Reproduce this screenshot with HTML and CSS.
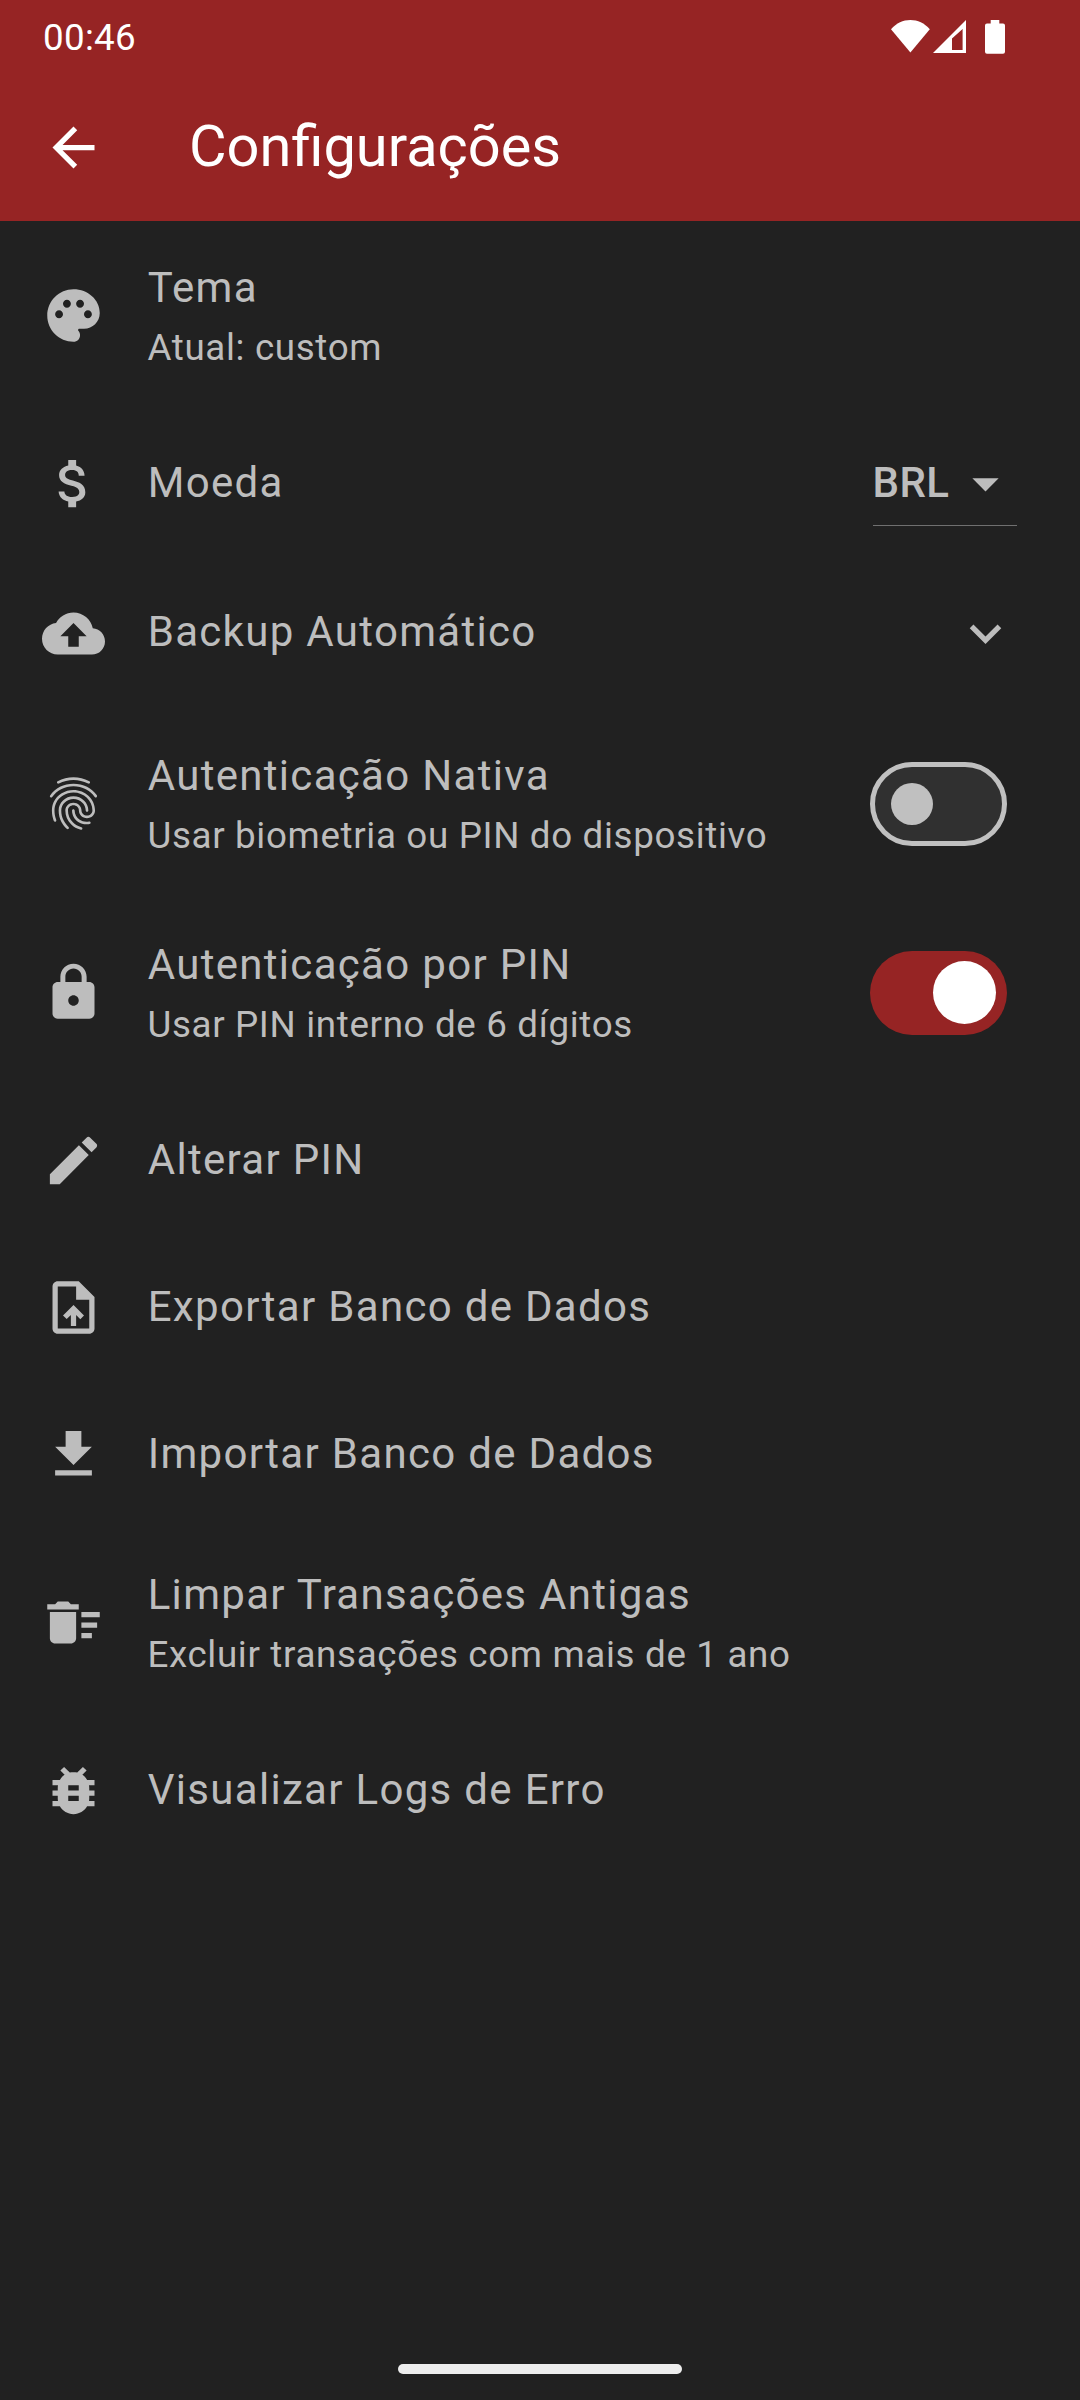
FILE: index.html
```html
<!DOCTYPE html>
<html lang="pt-BR">
<head>
  <meta charset="utf-8">
  <title>Configurações</title>
  <link rel="stylesheet" href="styles.css">
</head>
<body>
  <div class="screen">
    <header class="header">
      <div class="status-bar">
        <span class="clock">00:46</span>
        <div class="status-icons">
          <svg class="wifi" width="39" height="34" viewBox="0 0 39 34"><path d="M19.4 32.5L0 9.2C5.5 3 12 0 19.4 0s13.900 3 19.400 9.200z"/></svg>
          <svg class="signal" width="33" height="34" viewBox="0 0 33 34"><path fill-rule="evenodd" d="M33 0v33H0zM29.600 9L19 18.500V30h10.600z"/></svg>
          <svg class="battery" width="20" height="34" viewBox="0 0 20 34"><path d="M5.700 0h8.600v3.500H18a2 2 0 0 1 2 2v26.300a2 2 0 0 1-2 2H2a2 2 0 0 1-2-2V5.500a2 2 0 0 1 2-2h3.700z"/></svg>
        </div>
      </div>
      <div class="app-bar">
        <svg class="icon" viewBox="0 0 24 24"><path d="M20 11H7.830l5.590-5.590L12 4l-8 8 8 8 1.410-1.410L7.830 13H20v-2z"/></svg>
        <h1 class="app-title">Configurações</h1>
      </div>
    </header>

    <main class="list">
      <div class="row row-tall">
        <svg class="icon" viewBox="0 0 24 24"><path d="M12 2C6.490 2 2 6.490 2 12s4.490 10 10 10c1.380 0 2.500-1.120 2.500-2.500 0-.610-.230-1.200-.640-1.670-.080-.100-.130-.210-.130-.330 0-.280.220-.500.500-.500H16c3.310 0 6-2.690 6-6 0-4.960-4.490-9-10-9zm5.500 11c-.830 0-1.500-.670-1.500-1.500s.670-1.500 1.500-1.500 1.500.670 1.500 1.500-.670 1.500-1.500 1.500zm-3-4c-.830 0-1.500-.670-1.500-1.500S13.670 6 14.500 6s1.500.670 1.500 1.500S15.330 9 14.500 9zM5 11.500c0-.830.670-1.500 1.500-1.500s1.500.670 1.500 1.500S7.330 13 6.500 13 5 12.330 5 11.500zm6-4c0 .830-.670 1.500-1.500 1.500S8 8.330 8 7.500 8.670 6 9.500 6s1.500.670 1.500 1.500z"/></svg>
        <div class="text"><div class="title">Tema</div><div class="subtitle">Atual: custom</div></div>
      </div>

      <div class="row">
        <svg class="icon" viewBox="0 0 24 24"><path d="M11.8 10.9c-2.27-.59-3-1.2-3-2.15 0-1.09 1.01-1.85 2.7-1.85 1.78 0 2.44.85 2.5 2.1h2.21c-.07-1.72-1.12-3.3-3.21-3.81V3h-3v2.16c-1.94.42-3.5 1.68-3.5 3.61 0 2.31 1.91 3.46 4.7 4.13 2.5.6 3 1.48 3 2.41 0 .69-.49 1.79-2.7 1.79-2.06 0-2.87-.92-2.98-2.1h-2.2c.12 2.19 1.76 3.42 3.68 3.83V21h3v-2.15c1.95-.37 3.5-1.5 3.5-3.55 0-2.84-2.43-3.81-4.7-4.4z"/></svg>
        <div class="text"><div class="title">Moeda</div></div>
        <div class="dropdown">
          <span class="dropdown-value">BRL</span>
          <svg class="icon" viewBox="0 0 24 24"><path d="M7 10l5 5 5-5z"/></svg>
        </div>
      </div>

      <div class="row row-expandable">
        <svg class="icon" viewBox="0 0 24 24"><path d="M19.35 10.04C18.67 6.59 15.64 4 12 4 9.11 4 6.6 5.64 5.35 8.04 2.34 8.36 0 10.91 0 14c0 3.31 2.69 6 6 6h13c2.76 0 5-2.24 5-5 0-2.64-2.05-4.78-4.65-4.96zM14 13v4h-4v-4H7l5-5 5 5h-3z"/></svg>
        <div class="text"><div class="title">Backup Automático</div></div>
        <svg class="icon" viewBox="0 0 24 24"><path d="M16.59 8.59L12 13.17 7.41 8.59 6 10l6 6 6-6z"/></svg>
      </div>

      <div class="row row-tall">
        <svg class="icon" viewBox="0 0 24 24"><path d="M17.81 4.47c-.08 0-.16-.02-.23-.06C15.66 3.42 14 3 12.01 3c-1.98 0-3.86.47-5.57 1.41-.24.13-.54.04-.68-.2-.13-.24-.04-.55.2-.68C7.82 2.52 9.86 2 12.01 2c2.13 0 3.99.47 6.03 1.52.25.13.34.43.21.67-.09.18-.26.28-.44.28zM3.5 9.72c-.1 0-.2-.03-.29-.09-.23-.16-.28-.47-.12-.7.99-1.4 2.25-2.5 3.75-3.27C9.98 4.04 14 4.03 17.15 5.65c1.5.77 2.76 1.86 3.75 3.25.16.22.11.54-.12.7-.23.16-.54.11-.7-.12-.9-1.26-2.04-2.25-3.39-2.94-2.87-1.47-6.54-1.47-9.4.01-1.36.7-2.5 1.7-3.4 2.96-.08.14-.23.21-.39.21zm6.25 12.07c-.13 0-.26-.05-.35-.15-.87-.87-1.34-1.43-2.01-2.64-.69-1.23-1.05-2.73-1.05-4.34 0-2.97 2.54-5.39 5.66-5.39s5.66 2.42 5.66 5.39c0 .28-.22.5-.5.5s-.5-.22-.5-.5c0-2.42-2.09-4.39-4.66-4.39-2.57 0-4.66 1.97-4.66 4.39 0 1.44.32 2.77.93 3.85.64 1.15 1.08 1.64 1.85 2.42.19.2.19.51 0 .71-.11.1-.24.15-.37.15zm7.17-1.85c-1.19 0-2.24-.3-3.1-.89-1.49-1.01-2.38-2.65-2.38-4.39 0-.28.22-.5.5-.5s.5.22.5.5c0 1.41.72 2.74 1.94 3.56.71.48 1.54.71 2.54.71.24 0 .64-.03 1.04-.1.27-.05.53.13.58.41.05.27-.13.53-.41.58-.57.11-1.07.12-1.21.12zM14.91 22c-.04 0-.09-.01-.13-.02-1.59-.44-2.63-1.03-3.72-2.1-1.4-1.39-2.17-3.24-2.17-5.22 0-1.62 1.38-2.94 3.08-2.94 1.7 0 3.08 1.32 3.08 2.94 0 1.07.93 1.94 2.08 1.94s2.08-.87 2.08-1.94c0-3.77-3.25-6.83-7.25-6.83-2.84 0-5.44 1.58-6.61 4.03-.39.81-.59 1.76-.59 2.8 0 .78.07 2.01.67 3.61.1.26-.03.55-.29.64-.26.1-.55-.04-.64-.29-.49-1.31-.73-2.61-.73-3.96 0-1.2.23-2.29.68-3.24 1.33-2.79 4.28-4.6 7.51-4.6 4.55 0 8.25 3.51 8.25 7.83 0 1.62-1.38 2.94-3.08 2.94s-3.08-1.32-3.08-2.94c0-1.07-.93-1.94-2.08-1.94s-2.08.87-2.08 1.94c0 1.71.66 3.31 1.87 4.51.95.94 1.86 1.46 3.27 1.85.27.07.42.35.35.61-.05.23-.26.38-.47.38z"/></svg>
        <div class="text"><div class="title">Autenticação Nativa</div><div class="subtitle">Usar biometria ou PIN do dispositivo</div></div>
        <div class="switch"><span class="thumb"></span></div>
      </div>

      <div class="row row-tall">
        <svg class="icon" viewBox="0 0 24 24"><path d="M18 8h-1V6c0-2.76-2.24-5-5-5S7 3.24 7 6v2H6c-1.1 0-2 .9-2 2v10c0 1.100.9 2 2 2h12c1.100 0 2-.9 2-2V10c0-1.100-.9-2-2-2zm-6 9c-1.100 0-2-.9-2-2s.9-2 2-2 2 .9 2 2-.9 2-2 2zm3.100-9H8.900V6c0-1.710 1.390-3.100 3.100-3.100 1.710 0 3.100 1.390 3.100 3.100v2z"/></svg>
        <div class="text"><div class="title">Autenticação por PIN</div><div class="subtitle">Usar PIN interno de 6 dígitos</div></div>
        <div class="switch switch-on"><span class="thumb"></span></div>
      </div>

      <div class="row">
        <svg class="icon" viewBox="0 0 24 24"><path d="M3 17.25V21h3.75L17.81 9.940l-3.750-3.750L3 17.250zM20.710 7.040c.390-.390.390-1.020 0-1.410l-2.340-2.340c-.390-.390-1.020-.390-1.410 0l-1.830 1.830 3.750 3.750 1.830-1.830z"/></svg>
        <div class="text"><div class="title">Alterar PIN</div></div>
      </div>

      <div class="row">
        <svg class="icon" viewBox="0 0 24 24"><path d="M14 2H6c-1.100 0-1.990.9-1.990 2L4 20c0 1.100.890 2 1.990 2H18c1.100 0 2-.9 2-2V8l-6-6zm4 18H6V4h7v5h5v11zM8 15.010l1.410 1.410L11 14.840V19h2v-4.160l1.590 1.590L16 15.010 12.010 11 8 15.010z"/></svg>
        <div class="text"><div class="title">Exportar Banco de Dados</div></div>
      </div>

      <div class="row">
        <svg class="icon" viewBox="0 0 24 24"><path d="M19 9h-4V3H9v6H5l7 7 7-7zM5 18v2h14v-2H5z"/></svg>
        <div class="text"><div class="title">Importar Banco de Dados</div></div>
      </div>

      <div class="row row-tall">
        <svg class="icon" viewBox="0 0 24 24"><path d="M15 16h4v2h-4zm0-8h7v2h-7zm0 4h6v2h-6zM3 18c0 1.100.9 2 2 2h6c1.100 0 2-.9 2-2V8H3v10zM14 5h-3l-1-1H6L5 5H2v2h12z"/></svg>
        <div class="text"><div class="title">Limpar Transações Antigas</div><div class="subtitle">Excluir transações com mais de 1 ano</div></div>
      </div>

      <div class="row">
        <svg class="icon" viewBox="0 0 24 24"><path d="M20 8h-2.810c-.450-.780-1.070-1.450-1.820-1.960L17 4.410 15.590 3l-2.170 2.170C12.960 5.060 12.490 5 12 5c-.490 0-.960.060-1.410.170L8.410 3 7 4.410l1.620 1.630C7.880 6.550 7.260 7.220 6.810 8H4v2h2.090c-.050.330-.090.660-.090 1v1H4v2h2v1c0 .340.040.670.090 1H4v2h2.810c1.040 1.790 2.970 3 5.190 3s4.150-1.210 5.190-3H20v-2h-2.090c.050-.330.090-.660.090-1v-1h2v-2h-2v-1c0-.340-.040-.670-.090-1H20V8zm-6 8h-4v-2h4v2zm0-4h-4v-2h4v2z"/></svg>
        <div class="text"><div class="title">Visualizar Logs de Erro</div></div>
      </div>
    </main>

    <footer class="nav"><div class="nav-handle"></div></footer>
  </div>
</body>
</html>
```
FILE: styles.css
```css
* {
  box-sizing: border-box;
}

body {
  margin: 0;
  background: #212121;
  color: #bdbdbd;
  font-family: Roboto, sans-serif;
}

svg {
  display: block;
  flex: none;
  fill: currentColor;
}

.screen {
  display: flex;
  flex-direction: column;
  width: 1080px;
  height: 2400px;
}

/* Header */
.header {
  height: 220.5px;
  background: #962424;
  color: #fff;
}

.status-bar {
  display: flex;
  align-items: center;
  justify-content: space-between;
  height: 73.5px;
  padding: 1px 75px 0 43px;
}

.clock {
  font-size: 36.75px;
  line-height: 43px;
  letter-spacing: 0.3px;
}

.status-icons {
  display: flex;
}

.signal {
  margin-left: 3px;
}

.battery {
  margin-left: 19px;
}

.app-bar {
  display: flex;
  align-items: center;
  gap: 84px;
  height: 147px;
  padding: 0 42px;
}

.app-title {
  margin: 0 0 2px;
  font-size: 57.75px;
  font-weight: 400;
  line-height: 68px;
}

/* Settings list */
.icon {
  width: 63px;
  height: 63px;
}

.list {
  flex: 1;
}

.row {
  display: flex;
  align-items: center;
  gap: 42px;
  height: 147px;
  padding: 0 63px 0 42px;
}

.row-tall {
  height: 189px;
}

.row-expandable {
  height: 152.25px;
}

.row-expandable .icon {
  margin-top: 1.5px;
}

.text {
  flex: 1;
  white-space: nowrap;
}

.title {
  padding-left: 0.7px;
  font-size: 42px;
  line-height: 63px;
  letter-spacing: 1.3125px;
}

.title:only-child {
  margin-bottom: 1.5px;
}

.subtitle {
  margin-top: 2px;
  padding-left: 0.4px;
  font-size: 36.75px;
  line-height: 53px;
  letter-spacing: 0.656px;
}

/* Currency dropdown */
.dropdown {
  display: flex;
  align-items: center;
  justify-content: space-between;
  width: 144.5px;
  height: 84px;
  box-shadow: 0 1px #707070;
}

.dropdown-value {
  margin-bottom: 1.5px;
  font-size: 42px;
  font-weight: 500;
  line-height: 63px;
  letter-spacing: 0.4px;
}

/* Switches */
.switch {
  display: flex;
  align-items: center;
  width: 136.5px;
  height: 84px;
  margin: 1px 10.5px 0 0;
  padding: 0 15.75px;
  border: 5.25px solid #c0c0c0;
  border-radius: 42px;
  background: #303030;
}

.thumb {
  width: 42px;
  height: 42px;
  border-radius: 50%;
  background: #c0c0c0;
}

.switch-on {
  justify-content: flex-end;
  padding: 0 10.5px;
  border: 0;
  background: #962424;
}

.switch-on .thumb {
  width: 63px;
  height: 63px;
  background: #fff;
}

/* Gesture navigation */
.nav {
  display: flex;
  justify-content: center;
  padding-bottom: 26px;
}

.nav-handle {
  width: 284px;
  height: 10px;
  border-radius: 5px;
  background: #ededed;
}
```
